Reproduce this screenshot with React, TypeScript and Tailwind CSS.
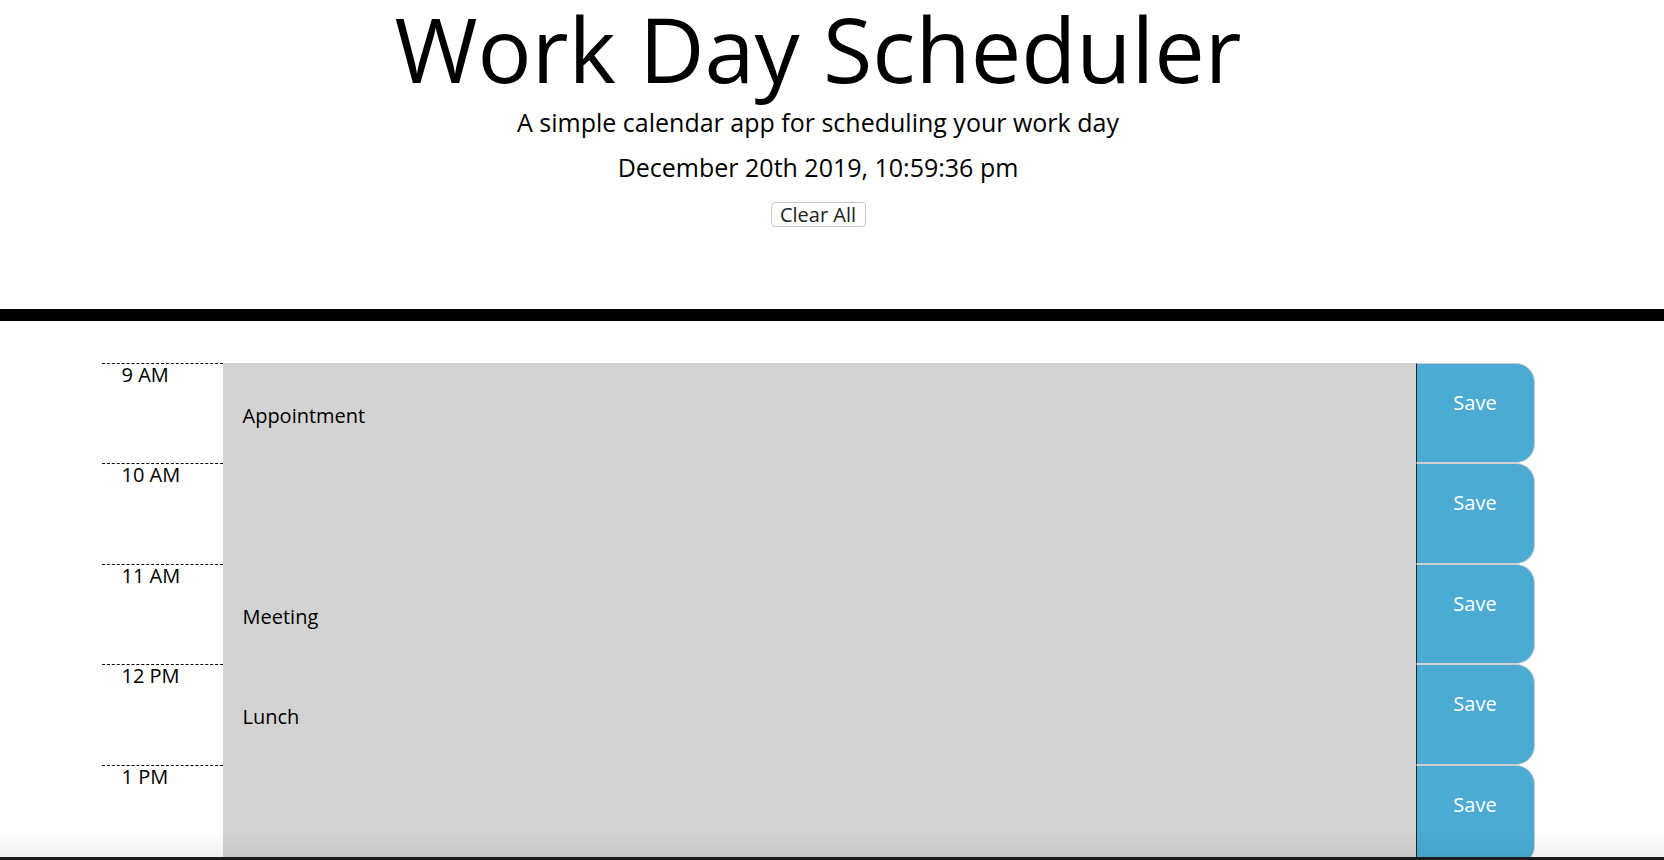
import React from "react";

interface Slot {
  hour: string;
  text: string;
}

const slots: Slot[] = [
  { hour: "9 AM", text: "Appointment" },
  { hour: "10 AM", text: "" },
  { hour: "11 AM", text: "Meeting" },
  { hour: "12 PM", text: "Lunch" },
  { hour: "1 PM", text: "" },
  { hour: "2 PM", text: "" },
  { hour: "3 PM", text: "" },
  { hour: "4 PM", text: "" },
  { hour: "5 PM", text: "" },
];

const TimeBlock: React.FC<{ slot: Slot }> = ({ slot }) => {
  return (
    <div className="flex h-[100.5px]">
      <div className="w-[121px] border-t border-dashed border-black pl-[20px] text-[20px] leading-[22px] text-black">
        {slot.hour}
      </div>
      <textarea
        defaultValue={slot.text}
        className="flex-1 resize-none bg-[#d3d3d3] pl-[20px] pt-[38px] text-[20px] leading-[30px] text-black outline-none font-['Open_Sans',sans-serif]"
      />
      <button className="w-[119px] rounded-r-[19px] border border-l-[#1f2427] border-t-[#cfcfcf] border-r-[#cfcfcf] border-b-[#cfcfcf] bg-[#4babd3] pt-[24px] text-[20px] leading-[30px] text-white self-stretch flex justify-center items-start">
        Save
      </button>
    </div>
  );
};

export default function App() {
  return (
    <div className="relative min-h-screen bg-white font-['Open_Sans',sans-serif] text-black">
      <header className="border-b-[12px] border-black pb-[81px]">
        <div className="w-[1636px] text-center">
          <h1 className="pt-[3px] text-[90px] font-normal leading-[90px]">Work Day Scheduler</h1>
          <p className="mt-[14px] text-[25px] leading-[30px]">
            A simple calendar app for scheduling your work day
          </p>
          <p className="mt-[15px] text-[25px] leading-[30px]">December 20th 2019, 10:59:36 pm</p>
          <button className="mt-[20px] h-[25px] w-[95px] rounded-[4px] border border-[#c8c8c8] bg-white text-[20px] leading-[22px] text-[#222]">
            Clear All
          </button>
        </div>
      </header>

      <div className="w-[1636px] pt-[42px]">
        <div className="mx-auto w-[1433px]">
          {slots.map((s) => (
            <TimeBlock key={s.hour} slot={s} />
          ))}
        </div>
      </div>

      <div className="pointer-events-none fixed inset-x-0 bottom-0">
        <div className="h-[28px] bg-gradient-to-b from-transparent to-black/5" />
        <div className="h-[3px] bg-[#1b1b1b]" />
      </div>
    </div>
  );
}
